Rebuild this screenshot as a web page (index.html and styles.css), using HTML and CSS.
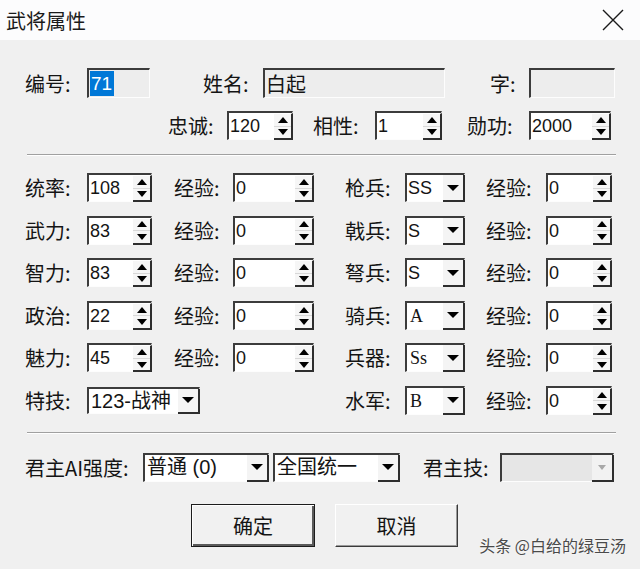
FILE: index.html
```html
<!DOCTYPE html>
<html lang="zh-CN">
<head>
    <meta charset="UTF-8">
    <title>武将属性</title>
    <link rel="stylesheet" href="styles.css">
</head>
<body>

    <div class="dialog">
        <div class="titlebar">
            <span class="title">武将属性</span>
            <svg class="close" width="22" height="22" viewBox="0 0 22 22">
                <path d="M1 1 L21 21 M21 1 L1 21" stroke="#1a1a1a" stroke-width="1.4" fill="none"/>
            </svg>
        </div>

        <div class="content">
            <!-- identity -->
            <div class="line line-id">
                <span class="lbl w62">编号:</span>
                <div class="field ro w63"><span class="sel">71</span></div>
                <span class="lbl w60 ml53">姓名:</span>
                <div class="field ro w182">白起</div>
                <span class="lbl w39 ml45">字:</span>
                <div class="field ro w86"></div>
            </div>

            <div class="line line-rel">
                <span class="lbl w59 ml143">忠诚:</span>
                <div class="field spin w66"><span class="val">120</span><span class="spin-btn"><i class="up"></i><i class="dn"></i></span></div>
                <span class="lbl w62 ml20">相性:</span>
                <div class="field spin w67"><span class="val">1</span><span class="spin-btn"><i class="up"></i><i class="dn"></i></span></div>
                <span class="lbl w62 ml25">勋功:</span>
                <div class="field spin w82"><span class="val">2000</span><span class="spin-btn"><i class="up"></i><i class="dn"></i></span></div>
            </div>

            <div class="sep"></div>

            <!-- stats and troop aptitudes -->
            <div class="stats">
                <span class="lbl">统率:</span>
                <div class="field spin w65"><span class="val">108</span><span class="spin-btn"><i class="up"></i><i class="dn"></i></span></div>
                <span class="lbl">经验:</span>
                <div class="field spin w81"><span class="val">0</span><span class="spin-btn"><i class="up"></i><i class="dn"></i></span></div>
                <span class="lbl">枪兵:</span>
                <div class="field combo w60"><span class="val">SS</span><span class="drop"><i class="dn"></i></span></div>
                <span class="lbl">经验:</span>
                <div class="field spin w66"><span class="val">0</span><span class="spin-btn"><i class="up"></i><i class="dn"></i></span></div>

                <span class="lbl">武力:</span>
                <div class="field spin w65"><span class="val">83</span><span class="spin-btn"><i class="up"></i><i class="dn"></i></span></div>
                <span class="lbl">经验:</span>
                <div class="field spin w81"><span class="val">0</span><span class="spin-btn"><i class="up"></i><i class="dn"></i></span></div>
                <span class="lbl">戟兵:</span>
                <div class="field combo w60"><span class="val">S</span><span class="drop"><i class="dn"></i></span></div>
                <span class="lbl">经验:</span>
                <div class="field spin w66"><span class="val">0</span><span class="spin-btn"><i class="up"></i><i class="dn"></i></span></div>

                <span class="lbl">智力:</span>
                <div class="field spin w65"><span class="val">83</span><span class="spin-btn"><i class="up"></i><i class="dn"></i></span></div>
                <span class="lbl">经验:</span>
                <div class="field spin w81"><span class="val">0</span><span class="spin-btn"><i class="up"></i><i class="dn"></i></span></div>
                <span class="lbl">弩兵:</span>
                <div class="field combo w60"><span class="val">S</span><span class="drop"><i class="dn"></i></span></div>
                <span class="lbl">经验:</span>
                <div class="field spin w66"><span class="val">0</span><span class="spin-btn"><i class="up"></i><i class="dn"></i></span></div>

                <span class="lbl">政治:</span>
                <div class="field spin w65"><span class="val">22</span><span class="spin-btn"><i class="up"></i><i class="dn"></i></span></div>
                <span class="lbl">经验:</span>
                <div class="field spin w81"><span class="val">0</span><span class="spin-btn"><i class="up"></i><i class="dn"></i></span></div>
                <span class="lbl">骑兵:</span>
                <div class="field combo w60"><span class="val serif">A</span><span class="drop"><i class="dn"></i></span></div>
                <span class="lbl">经验:</span>
                <div class="field spin w66"><span class="val">0</span><span class="spin-btn"><i class="up"></i><i class="dn"></i></span></div>

                <span class="lbl">魅力:</span>
                <div class="field spin w65"><span class="val">45</span><span class="spin-btn"><i class="up"></i><i class="dn"></i></span></div>
                <span class="lbl">经验:</span>
                <div class="field spin w81"><span class="val">0</span><span class="spin-btn"><i class="up"></i><i class="dn"></i></span></div>
                <span class="lbl">兵器:</span>
                <div class="field combo w60"><span class="val serif">Ss</span><span class="drop"><i class="dn"></i></span></div>
                <span class="lbl">经验:</span>
                <div class="field spin w66"><span class="val">0</span><span class="spin-btn"><i class="up"></i><i class="dn"></i></span></div>

                <span class="lbl">特技:</span>
                <div class="field combo w113 short"><span class="val mixed">123-战神</span><span class="drop"><i class="dn"></i></span></div>
                <span class="lbl col5">水军:</span>
                <div class="field combo w60"><span class="val serif">B</span><span class="drop"><i class="dn"></i></span></div>
                <span class="lbl">经验:</span>
                <div class="field spin w66"><span class="val">0</span><span class="spin-btn"><i class="up"></i><i class="dn"></i></span></div>
            </div>

            <div class="sep sep-low"></div>

            <!-- ruler settings -->
            <div class="line line-ruler">
                <span class="lbl w118">君主AI强度:</span>
                <div class="field combo w126"><span class="val mixed">普通 (0)</span><span class="drop"><i class="dn"></i></span></div>
                <div class="field combo w127 ml4"><span class="val mixed">全国统一</span><span class="drop"><i class="dn"></i></span></div>
                <span class="lbl w77 ml23">君主技:</span>
                <div class="field combo off w114"><span class="val"></span><span class="drop"><i class="dn"></i></span></div>
            </div>

            <div class="buttons">
                <button class="btn default">确定</button>
                <button class="btn">取消</button>
            </div>
        </div>

        <div class="watermark">头条 @白给的绿豆汤</div>
    </div>

</body>
</html>
```

FILE: styles.css
```css
body {
    margin: 0;
    background-color: #f0f0f0;
    color: #141414;
    font-family: "Noto Sans CJK SC", sans-serif;
}

.dialog {
    position: relative;
    width: 640px;
    height: 569px;
    overflow: hidden;
    background-color: #f0f0f0;
}

.titlebar {
    height: 40px;
    background-color: #fcfcfd;
    display: flex;
    align-items: center;
    justify-content: space-between;
    padding: 0 16px 0 6px;
}

.title {
    font-size: 20px;
    color: #1a1a1a;
}

.content {
    padding: 28px 0 0 25px;
}

.line {
    display: flex;
    align-items: center;
}

.line-rel {
    margin-top: 13px;
}

.lbl {
    font-size: 20px;
    line-height: 29px;
    white-space: nowrap;
    flex-shrink: 0;
}

/* sunken edit box */
.field {
    box-sizing: border-box;
    height: 29px;
    display: flex;
    align-items: stretch;
    flex-shrink: 0;
    background-color: #fff;
    border-top: 2px solid #3c3c3c;
    border-left: 2px solid #3c3c3c;
    border-right: 1px solid #fdfdfd;
    border-bottom: 1px solid #fdfdfd;
    font-family: "Liberation Sans", sans-serif;
    font-size: 18px;
}

.field.ro {
    height: 30px;
    background-color: #ededed;
    align-items: center;
    padding-left: 1px;
    font-family: "Noto Sans CJK SC", sans-serif;
    font-size: 20px;
}

.sel {
    background-color: #0078d7;
    color: #fff;
    font-family: "Liberation Sans", sans-serif;
    font-size: 19px;
    line-height: 25px;
    padding: 0 2px 0 1px;
}

.val {
    flex: 1;
    min-width: 0;
    line-height: 26px;
    padding-left: 1px;
    white-space: nowrap;
    overflow: hidden;
}

.val.serif {
    font-family: "Liberation Serif", serif;
    padding-left: 3px;
}

.val.mixed {
    font-family: "Liberation Sans", "Noto Sans CJK SC", sans-serif;
    font-size: 20px;
    line-height: 25px;
    padding-left: 2px;
}

/* up/down spin button */
.spin-btn {
    box-sizing: border-box;
    width: 19px;
    flex-shrink: 0;
    display: flex;
    flex-direction: column;
    background-color: #f6f6f6;
    border-right: 2px solid #2e2e2e;
    border-bottom: 2px solid #2e2e2e;
    border-top: 1px solid #fff;
    margin-right: -1px;
    margin-bottom: -1px;
}

.up,
.dn {
    display: flex;
    align-items: center;
    justify-content: center;
}

.spin-btn .up,
.spin-btn .dn {
    flex: 1;
}

.spin-btn .up {
    border-bottom: 1px solid #d8d8d8;
}

.up::after,
.dn::after {
    content: "";
    display: block;
    width: 0;
    height: 0;
    border-left: 5px solid transparent;
    border-right: 5px solid transparent;
}

.up::after {
    border-bottom: 6px solid #000;
}

.dn::after {
    border-top: 6px solid #000;
}

/* drop-down button */
.drop {
    box-sizing: border-box;
    width: 22px;
    flex-shrink: 0;
    display: flex;
    align-items: center;
    justify-content: center;
    background-color: #f4f4f4;
    border-right: 2px solid #2e2e2e;
    border-bottom: 2px solid #2e2e2e;
    margin-right: -1px;
    margin-bottom: -1px;
}

.drop .dn::after {
    border-left-width: 6px;
    border-right-width: 6px;
    border-top-width: 6px;
}

.field.short {
    height: 27px;
}

.field.off {
    background-color: #e6e6e6;
}

.field.off .drop {
    background-color: #f2f2f2;
}

.field.off .dn::after {
    border-left-width: 4px;
    border-right-width: 4px;
    border-top: 5px solid #a8a8a8;
}

.sep {
    width: 589px;
    margin: 14px 0 0 2px;
    border-top: 1px solid #a0a0a0;
    border-bottom: 1px solid #fff;
}

.sep-low {
    margin-top: 17px;
}

.stats {
    display: grid;
    grid-template-columns: 62px 87px 59px 112px 60px 81px 60px 66px;
    grid-auto-rows: 29px;
    row-gap: 13.6px;
    margin-top: 17px;
    align-items: center;
}

.col5 {
    grid-column-start: 5;
}

.line-ruler {
    margin-top: 19px;
}

.buttons {
    display: flex;
    gap: 20px;
    margin: 22px 0 0 166px;
}

.btn {
    box-sizing: border-box;
    width: 123px;
    height: 43px;
    background-color: #f1f1f1;
    border: 1px solid;
    border-color: #fff #3a3a3a #3a3a3a #fff;
    box-shadow: inset -1px -1px 0 #9a9a9a;
    font-family: "Noto Sans CJK SC", sans-serif;
    font-size: 20px;
    color: #141414;
    padding: 0;
}

.btn.default {
    width: 124px;
    border: 1px solid #1c1c1c;
    box-shadow: inset 1px 1px 0 #fff, inset -2px -2px 0 #5a5a5a;
}

.watermark {
    position: absolute;
    right: 14px;
    bottom: 12px;
    font-size: 16px;
    color: #4a4a4a;
    text-shadow: 0 0 2px #fff;
}

/* fixed widths and offsets */
.w39 { width: 39px; }
.w59 { width: 59px; }
.w60 { width: 60px; }
.w62 { width: 62px; }
.w63 { width: 63px; }
.w65 { width: 65px; }
.w66 { width: 66px; }
.w67 { width: 67px; }
.w77 { width: 77px; }
.w81 { width: 81px; }
.w82 { width: 82px; }
.w86 { width: 86px; }
.w113 { width: 113px; }
.w114 { width: 114px; }
.w118 { width: 118px; }
.w126 { width: 126px; }
.w127 { width: 127px; }
.w182 { width: 182px; }
.ml4 { margin-left: 4px; }
.ml20 { margin-left: 20px; }
.ml23 { margin-left: 23px; }
.ml25 { margin-left: 25px; }
.ml45 { margin-left: 45px; }
.ml53 { margin-left: 53px; }
.ml143 { margin-left: 143px; }
```
